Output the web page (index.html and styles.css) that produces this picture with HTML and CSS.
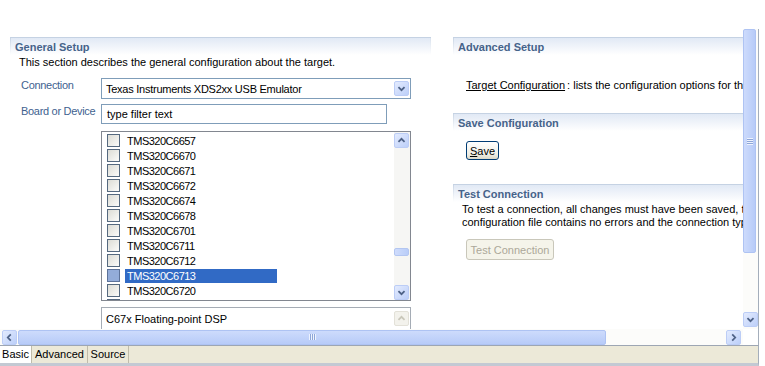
FILE: index.html
```html
<!DOCTYPE html>
<html>
<head>
<meta charset="utf-8">
<link rel="stylesheet" href="styles.css">
</head>
<body>
<div class="app">
  <div class="main">
    <div class="content">
      <section class="sec">
        <div class="sec-head">General Setup</div>
        <p class="sec-desc">This section describes the general configuration about the target.</p>
        <div class="row r1">
          <span class="lbl">Connection</span>
          <div class="combo">
            <span class="combo-text">Texas Instruments XDS2xx USB Emulator</span>
            <span class="abtn combo-btn"><svg width="15" height="15" viewBox="0 0 15 15"><polyline points="4,6 7.5,9.5 11,6" fill="none" stroke="#4d6185" stroke-width="2"/></svg></span>
          </div>
        </div>
        <div class="row r2">
          <span class="lbl">Board or Device</span>
          <div class="filter">type filter text</div>
        </div>
        <div class="row r3">
          <div class="list">
            <div class="rows">
              <div class="item"><span class="cb"></span><span class="it">TMS320C6657</span></div>
              <div class="item"><span class="cb"></span><span class="it">TMS320C6670</span></div>
              <div class="item"><span class="cb"></span><span class="it">TMS320C6671</span></div>
              <div class="item"><span class="cb"></span><span class="it">TMS320C6672</span></div>
              <div class="item"><span class="cb"></span><span class="it">TMS320C6674</span></div>
              <div class="item"><span class="cb"></span><span class="it">TMS320C6678</span></div>
              <div class="item"><span class="cb"></span><span class="it">TMS320C6701</span></div>
              <div class="item"><span class="cb"></span><span class="it">TMS320C6711</span></div>
              <div class="item"><span class="cb"></span><span class="it">TMS320C6712</span></div>
              <div class="item sel"><span class="cb"></span><span class="it">TMS320C6713</span></div>
              <div class="item"><span class="cb"></span><span class="it">TMS320C6720</span></div>
              <div class="item"><span class="cb"></span><span class="it"></span></div>
            </div>
            <div class="lvs">
              <span class="abtn"><svg width="15" height="15" viewBox="0 0 15 15"><polyline points="4,9 7.5,5.5 11,9" fill="none" stroke="#4d6185" stroke-width="2"/></svg></span>
              <div class="ltrack"><span class="lthumb"></span></div>
              <span class="abtn"><svg width="15" height="15" viewBox="0 0 15 15"><polyline points="4,6 7.5,9.5 11,6" fill="none" stroke="#4d6185" stroke-width="2"/></svg></span>
            </div>
          </div>
        </div>
        <div class="row r4">
          <div class="desc">
            <span class="desc-text">C67x Floating-point DSP</span>
            <span class="dbtn"><svg width="15" height="15" viewBox="0 0 15 15"><polyline points="4,9 7.5,5.5 11,9" fill="none" stroke="#c9c7ba" stroke-width="2"/></svg></span>
          </div>
        </div>
      </section>
      <section class="sec">
        <div class="sec-head">Advanced Setup</div>
        <p class="link-line"><span class="link">Target Configuration</span><span class="colon">:</span> lists the configuration options for the target.</p>
        <div class="sec-head gap-save">Save Configuration</div>
        <button class="btn btn-save"><span class="ul">S</span>ave</button>
        <div class="sec-head gap-test">Test Connection</div>
        <p class="test-text">To test a connection, all changes must have been saved, the<br>configuration file contains no errors and the connection type</p>
        <button class="btn btn-test">Test Connection</button>
      </section>
    </div>
    <div class="vscroll">
      <div class="vthumb"><span class="vgrip"></span></div>
      <div class="vtrack"></div>
      <span class="abtn"><svg width="15" height="15" viewBox="0 0 15 15"><polyline points="4,6 7.5,9.5 11,6" fill="none" stroke="#4d6185" stroke-width="2"/></svg></span>
    </div>
  </div>
  <div class="hrow">
    <div class="hbar">
      <span class="abtn"><svg width="15" height="15" viewBox="0 0 15 15"><polyline points="9,4 5.5,7.5 9,11" fill="none" stroke="#4d6185" stroke-width="2"/></svg></span>
      <div class="hthumb"><span class="hgrip"></span></div>
      <div class="htrack"></div>
      <span class="abtn"><svg width="15" height="15" viewBox="0 0 15 15"><polyline points="6,4 9.5,7.5 6,11" fill="none" stroke="#4d6185" stroke-width="2"/></svg></span>
    </div>
    <div class="corner"></div>
  </div>
  <div class="tabs">
    <span class="tab active t-basic">Basic</span>
    <span class="tab t-adv">Advanced</span>
    <span class="tab t-src">Source</span>
  </div>
</div>
</body>
</html>
```

FILE: styles.css
```css
* { box-sizing: border-box; }
body {
  margin: 0;
  width: 765px;
  height: 366px;
  overflow: hidden;
  background: #fff;
  font: 11px "Liberation Sans", Arial, sans-serif;
  color: #000;
}
p { margin: 0; }
.app { width: 759px; height: 366px; display: flex; flex-direction: column; }
.main { height: 329px; display: flex; flex: none; }
.content {
  width: 743px;
  flex: none;
  overflow: hidden;
  display: flex;
  gap: 22px;
  padding: 37px 0 0 10px;
}
.sec { width: 421px; flex: none; }
.sec-head {
  height: 18px;
  border-top: 1px solid #c5d2e3;
  background:
    linear-gradient(#c9d5e5, #fff) left top / 1px 100% no-repeat,
    linear-gradient(#d9e2ee, #fff) right top / 1px 100% no-repeat,
    linear-gradient(#e1e9f5, #f3f6fb 60%, #fff);
  padding: 1px 0 0 5px;
  font-weight: bold;
  color: #46638a;
  line-height: 16px;
  white-space: nowrap;
}
.sec-desc { padding-left: 9px; line-height: 14px; white-space: nowrap; }
.row { display: flex; }
.r1 { margin-top: 9px; }
.r2 { margin-top: 5px; }
.r3 { margin-top: 7px; padding-left: 91px; }
.r4 { margin-top: 6px; padding-left: 91px; }
.lbl {
  width: 91px;
  flex: none;
  padding-left: 11px;
  color: #41628f;
  line-height: 14px;
  white-space: nowrap;
  letter-spacing: -0.3px;
}
.combo {
  width: 310px;
  height: 21px;
  border: 1px solid #7f9db9;
  display: flex;
  align-items: center;
  justify-content: space-between;
  padding: 0 1px 0 4px;
}
.combo-text { letter-spacing: -0.25px; }
.combo-btn { height: 17px; }
.filter {
  width: 286px;
  height: 20px;
  border: 1px solid #7f9db9;
  padding-left: 5px;
  line-height: 18px;
}
.abtn {
  width: 15px;
  height: 15px;
  flex: none;
  border: 1px solid #bccdf6;
  border-radius: 2px;
  background: linear-gradient(135deg, #e3ebfe, #bccff9);
  display: flex;
  align-items: center;
  justify-content: center;
}
.abtn svg { display: block; }
.list {
  width: 310px;
  height: 170px;
  border: 1px solid #828790;
  display: flex;
}
.rows { flex: 1; overflow: hidden; padding-top: 1px; }
.item { height: 15px; display: flex; align-items: center; padding-left: 5px; }
.cb {
  width: 13px;
  height: 13px;
  flex: none;
  border: 1px solid #55697f;
  background: linear-gradient(135deg, #dcdcd5, #fbfbf9);
}
.it {
  margin-left: 5px;
  padding-left: 2px;
  width: 152px;
  height: 14px;
  line-height: 14px;
  letter-spacing: -0.5px;
}
.sel .cb { background: #93acd9; border-color: #5c7299; }
.sel .it { background: #316ac5; color: #fff; }
.lvs {
  width: 16px;
  flex: none;
  display: flex;
  flex-direction: column;
  padding: 1px 1px 0 0;
  background: #f6f6f4;
}
.ltrack { flex: 1; padding-top: 100px; }
.lthumb {
  display: block;
  height: 8px;
  border: 1px solid #b3c6f1;
  border-radius: 2px;
  background: linear-gradient(90deg, #cfdcfc, #b9cdf8);
}
.desc {
  width: 310px;
  height: 30px;
  border: 1px solid #a5acb5;
  display: flex;
  justify-content: space-between;
  padding: 2px 1px 0 4px;
}
.desc-text { line-height: 18px; }
.dbtn {
  width: 15px;
  height: 15px;
  margin-top: 1px;
  border: 1px solid #e3e1d8;
  border-radius: 2px;
  background: #f3f2ec;
  display: flex;
  align-items: center;
  justify-content: center;
}
.link-line { margin-top: 23px; padding-left: 13px; line-height: 14px; white-space: nowrap; }
.link { text-decoration: underline; }
.colon { margin-left: 2px; }
.gap-save { margin-top: 21px; }
.gap-test { margin-top: 24px; }
.btn {
  display: block;
  font: 11px "Liberation Sans", Arial, sans-serif;
  padding: 0;
  border-radius: 3px;
  margin-left: 13px;
}
.btn-save {
  margin-top: 10px;
  width: 33px;
  height: 19px;
  border: 1px solid #003c74;
  background: linear-gradient(#ffffff, #f0efe6 70%, #dcd8c8);
  color: #000;
}
.ul { text-decoration: underline; }
.test-text { padding-left: 9px; line-height: 13px; margin-top: 1px; white-space: nowrap; }
.btn-test {
  margin-top: 10px;
  width: 88px;
  height: 21px;
  border: 1px solid #c9c7ba;
  background: #f5f4ea;
  color: #aca899;
}
.vscroll {
  width: 16px;
  flex: none;
  margin-top: 29px;
  display: flex;
  flex-direction: column;
  padding: 0 2px 2px 0;
  border-right: 1px solid #a4aebb;
  background: #fcfcfa;
}
.vthumb {
  height: 224px;
  flex: none;
  border: 1px solid #aec3f3;
  border-radius: 2px;
  background: linear-gradient(90deg, #cddbfc, #b7cbf8);
  display: flex;
  align-items: center;
  justify-content: center;
}
.vgrip {
  width: 6px;
  height: 7px;
  background: repeating-linear-gradient(#eef3fe 0 1px, #8ea6d8 1px 2px);
}
.vtrack { flex: 1; }
.hrow { height: 16px; display: flex; flex: none; }
.hbar {
  width: 743px;
  flex: none;
  display: flex;
  align-items: center;
  padding: 0 2px;
  gap: 1px;
  background: #fcfcfa;
}
.hthumb {
  width: 588px;
  height: 15px;
  flex: none;
  border: 1px solid #aec3f3;
  border-radius: 2px;
  background: linear-gradient(#cddbfc, #b7cbf8);
  display: flex;
  align-items: center;
  justify-content: center;
}
.hgrip {
  width: 7px;
  height: 6px;
  background: repeating-linear-gradient(90deg, #eef3fe 0 1px, #8ea6d8 1px 2px);
}
.htrack { flex: 1; }
.corner { flex: 1; border-right: 1px solid #a4aebb; }
.tabs {
  flex: 1;
  display: flex;
  background: #ece9d8;
  border-top: 1px solid #9da6b3;
  border-right: 1px solid #a4aebb;
  border-bottom: 3px solid #c3c9d3;
}
.tab {
  line-height: 16px;
  height: 17px;
  text-align: center;
  border-right: 1px solid #c0bcaa;
  white-space: nowrap;
}
.tab.active { background: #fff; }
.t-basic { width: 32px; }
.t-adv { width: 56px; }
.t-src { width: 41px; }
```
